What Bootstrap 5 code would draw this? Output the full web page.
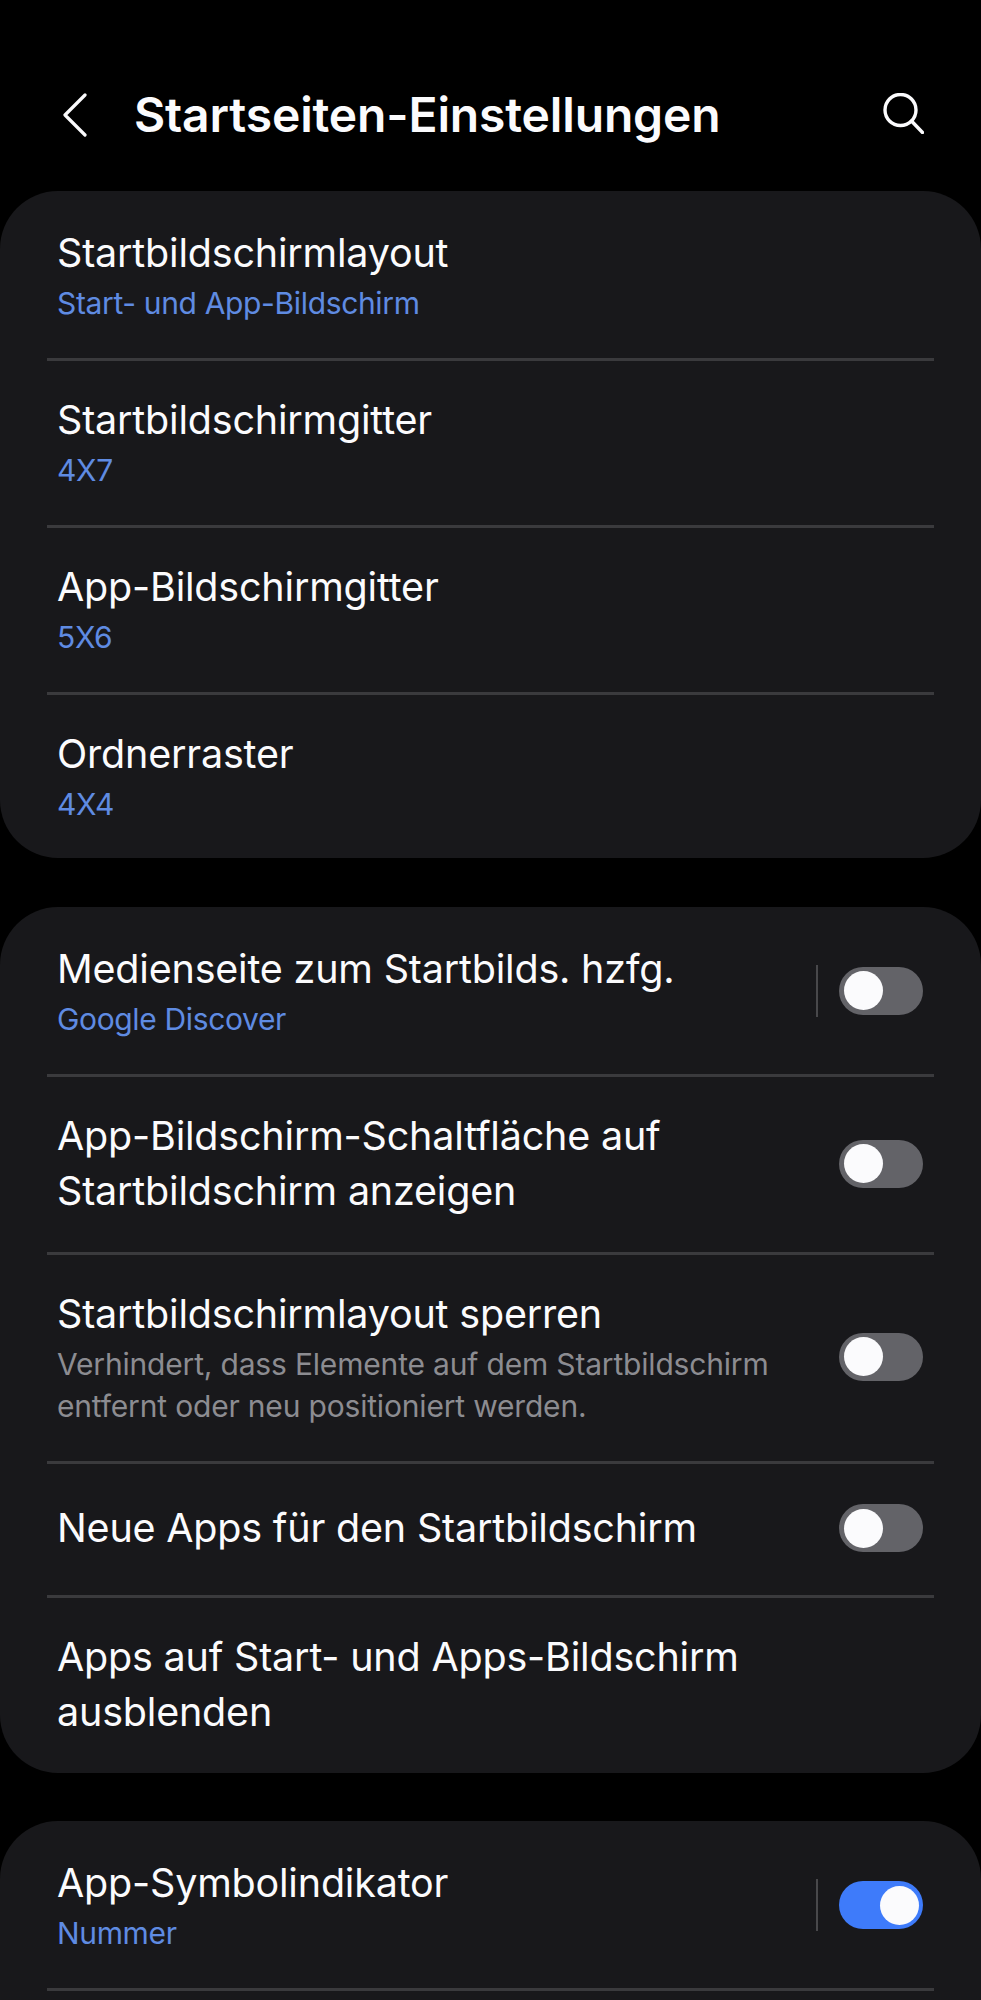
<!DOCTYPE html>
<html lang="de">
<head>
<meta charset="utf-8">
<title>Startseiten-Einstellungen</title>
<link rel="stylesheet" href="https://cdn.jsdelivr.net/npm/bootstrap@5.3.0/dist/css/bootstrap.min.css">
<style>
html,body{background:#000;margin:0}
.screen{height:2000px;overflow:hidden;background:#000;font-family:Inter,"Noto Sans",sans-serif;color:#fbfbfd}
.topbar{height:191px;padding:93px 57px 0 63px}
.topbar svg{display:block;flex:none}
.page-title{font-size:48px;line-height:44px;font-weight:600;letter-spacing:-.15px;margin:0 0 0 47px;color:#fbfbfd;white-space:nowrap}
.group{background:#18181b;border-radius:58px;margin-bottom:48.5px;padding:3px 47px 0}
.group-last{flex:1 1 auto;margin-bottom:0;border-bottom-left-radius:0;border-bottom-right-radius:0}
.item{padding:32px 11px 34px 10px;border-bottom:3px solid #3a3a3d}
.item-end{border-bottom:0;padding-bottom:33px}
.item-tall{padding-bottom:33px}
.item-desc{padding-bottom:34px}
.item-one{padding-top:37px;padding-bottom:39px}
.name{font-size:39.500px;line-height:55px;color:#fbfbfd;letter-spacing:-.2px}
.value{font-size:30px;line-height:42px;margin-top:1px;color:#5f8be2;letter-spacing:-.35px}
.desc{font-size:30px;line-height:42px;margin-top:1px;color:#8c8c91;letter-spacing:-.18px}
.sep{width:2px;height:52px;background:#48484b;margin-right:21px}
.switch{width:84px;height:48px;border-radius:24px;background:#636368;padding:0 4px 0 5px}
.switch-on{background:#3e7bfa}
.knob{width:39px;height:39px;border-radius:50%;background:#fbfbfd}
</style>
</head>
<body>
<div class="screen d-flex flex-column">
  <header class="topbar d-flex align-items-start">
    <svg width="24" height="44" viewBox="0 0 24 44" aria-label="Zurück"><path d="M22 2 2 22l20 20" fill="none" stroke="#fbfbfd" stroke-width="3.2" stroke-linecap="round" stroke-linejoin="round"/></svg>
    <h1 class="page-title flex-grow-1">Startseiten-Einstellungen</h1>
    <svg width="41" height="41" viewBox="0 0 41 41" aria-label="Suchen"><circle cx="17.500" cy="17" r="15.500" fill="none" stroke="#fbfbfd" stroke-width="3.4"/><path d="m28.500 28 11 11.500" fill="none" stroke="#fbfbfd" stroke-width="3.4" stroke-linecap="round"/></svg>
  </header>

  <section class="group">
    <div class="item"><div class="name">Startbildschirmlayout</div><div class="value">Start- und App-Bildschirm</div></div>
    <div class="item"><div class="name">Startbildschirmgitter</div><div class="value">4X7</div></div>
    <div class="item"><div class="name">App-Bildschirmgitter</div><div class="value">5X6</div></div>
    <div class="item item-end"><div class="name">Ordnerraster</div><div class="value">4X4</div></div>
  </section>

  <section class="group">
    <div class="item d-flex align-items-center">
      <div class="flex-grow-1"><div class="name">Medienseite zum Startbilds. hzfg.</div><div class="value">Google Discover</div></div>
      <span class="sep"></span>
      <span class="switch d-flex align-items-center"><span class="knob"></span></span>
    </div>
    <div class="item item-tall d-flex align-items-center">
      <div class="flex-grow-1"><div class="name">App-Bildschirm-Schaltfläche auf<br>Startbildschirm anzeigen</div></div>
      <span class="switch d-flex align-items-center"><span class="knob"></span></span>
    </div>
    <div class="item item-desc d-flex align-items-center">
      <div class="flex-grow-1"><div class="name">Startbildschirmlayout sperren</div><div class="desc">Verhindert, dass Elemente auf dem Startbildschirm<br>entfernt oder neu positioniert werden.</div></div>
      <span class="switch d-flex align-items-center"><span class="knob"></span></span>
    </div>
    <div class="item item-one d-flex align-items-center">
      <div class="flex-grow-1"><div class="name">Neue Apps für den Startbildschirm</div></div>
      <span class="switch d-flex align-items-center"><span class="knob"></span></span>
    </div>
    <div class="item item-end"><div class="name">Apps auf Start- und Apps-Bildschirm<br>ausblenden</div></div>
  </section>

  <section class="group group-last">
    <div class="item d-flex align-items-center">
      <div class="flex-grow-1"><div class="name">App-Symbolindikator</div><div class="value">Nummer</div></div>
      <span class="sep"></span>
      <span class="switch switch-on d-flex align-items-center justify-content-end"><span class="knob"></span></span>
    </div>
  </section>
</div>
<script src="https://cdn.jsdelivr.net/npm/bootstrap@5.3.0/dist/js/bootstrap.bundle.min.js"></script>
</body>
</html>
